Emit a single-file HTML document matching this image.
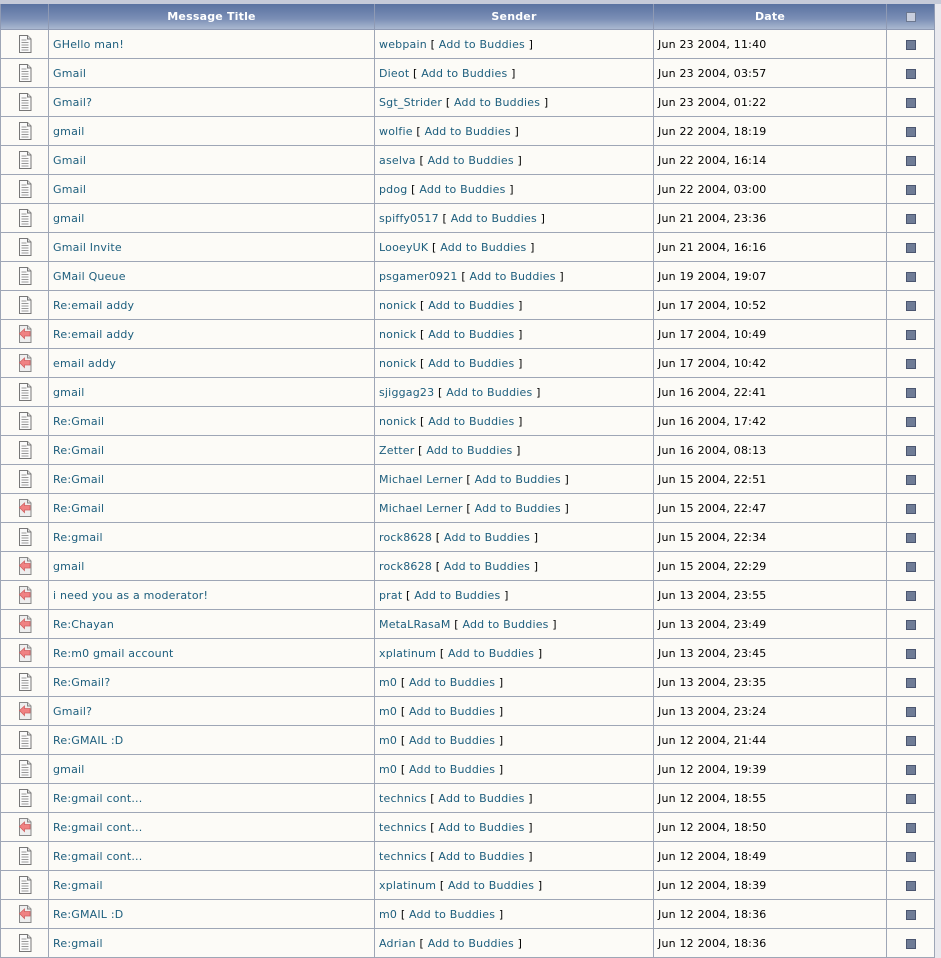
<!DOCTYPE html>
<html><head><meta charset="utf-8"><style>
body{margin:0;background:#e9e9ee;font-family:"DejaVu Sans","Liberation Sans",sans-serif;font-size:11px;letter-spacing:0.2px}
.top{height:4px;background:#c5cad8;width:941px}
table{border-collapse:collapse;table-layout:fixed;width:935px;background:#fcfbf7}
td,th{border:1px solid #9ea6b6;padding:0 0 0 4px;height:28px;white-space:nowrap;overflow:hidden}
th{height:25px;background:linear-gradient(#5a72a0,#7b8fb6 60%,#aab8d0);color:#fff;font-weight:bold;text-align:center;padding:0;border-top:none;border-color:#8f9ab4}
td.i,td.c{text-align:center;padding:0}
a{color:#1d5e7d;text-decoration:none}
.cb{display:inline-block;width:8px;height:8px;background:#6f7c96;border:1px solid #4b5670;vertical-align:middle}
th .cb{background:#c8cede;border-color:#6c7890}
svg{vertical-align:middle}
</style></head><body>
<div class="top"></div>
<svg width="0" height="0" style="position:absolute"><defs>
<symbol id="d" viewBox="0 0 16 18"><path d="M2.5 0.5h8l3.5 3.5v13.5h-11.5z" fill="#fafafa" stroke="#777"/><path d="M10.5 0.5v3.5h3.5" fill="#ddd" stroke="#777"/><path d="M4.5 5h5M4.5 7.5h7M4.5 10h7M4.5 12.5h7M4.5 15h7" stroke="#999"/></symbol>
<symbol id="r" viewBox="0 0 16 18"><path d="M2.5 0.5h8l3.5 3.5v13.5h-11.5z" fill="#eee" stroke="#888"/><path d="M10.5 0.5v3.5h3.5" fill="#ddd" stroke="#888"/><path d="M2.5 8.5l5-4.5v2.5h5.5v4.5h-5.5v2.5z" fill="#f08283" stroke="#d06060" stroke-width="0.8"/></symbol>
</defs></svg>
<table>
<colgroup><col style="width:48px"><col style="width:326px"><col style="width:279px"><col style="width:233px"><col style="width:48px"></colgroup>
<tr><th></th><th>Message Title</th><th>Sender</th><th>Date</th><th><span class="cb"></span></th></tr>
<tr><td class="i"><svg width="16" height="18"><use href="#d"/></svg></td><td><a>GHello man!</a></td><td><a>webpain</a> [ <a>Add to Buddies</a> ]</td><td>Jun 23 2004, 11:40</td><td class="c"><span class="cb"></span></td></tr>
<tr><td class="i"><svg width="16" height="18"><use href="#d"/></svg></td><td><a>Gmail</a></td><td><a>Dieot</a> [ <a>Add to Buddies</a> ]</td><td>Jun 23 2004, 03:57</td><td class="c"><span class="cb"></span></td></tr>
<tr><td class="i"><svg width="16" height="18"><use href="#d"/></svg></td><td><a>Gmail?</a></td><td><a>Sgt_Strider</a> [ <a>Add to Buddies</a> ]</td><td>Jun 23 2004, 01:22</td><td class="c"><span class="cb"></span></td></tr>
<tr><td class="i"><svg width="16" height="18"><use href="#d"/></svg></td><td><a>gmail</a></td><td><a>wolfie</a> [ <a>Add to Buddies</a> ]</td><td>Jun 22 2004, 18:19</td><td class="c"><span class="cb"></span></td></tr>
<tr><td class="i"><svg width="16" height="18"><use href="#d"/></svg></td><td><a>Gmail</a></td><td><a>aselva</a> [ <a>Add to Buddies</a> ]</td><td>Jun 22 2004, 16:14</td><td class="c"><span class="cb"></span></td></tr>
<tr><td class="i"><svg width="16" height="18"><use href="#d"/></svg></td><td><a>Gmail</a></td><td><a>pdog</a> [ <a>Add to Buddies</a> ]</td><td>Jun 22 2004, 03:00</td><td class="c"><span class="cb"></span></td></tr>
<tr><td class="i"><svg width="16" height="18"><use href="#d"/></svg></td><td><a>gmail</a></td><td><a>spiffy0517</a> [ <a>Add to Buddies</a> ]</td><td>Jun 21 2004, 23:36</td><td class="c"><span class="cb"></span></td></tr>
<tr><td class="i"><svg width="16" height="18"><use href="#d"/></svg></td><td><a>Gmail Invite</a></td><td><a>LooeyUK</a> [ <a>Add to Buddies</a> ]</td><td>Jun 21 2004, 16:16</td><td class="c"><span class="cb"></span></td></tr>
<tr><td class="i"><svg width="16" height="18"><use href="#d"/></svg></td><td><a>GMail Queue</a></td><td><a>psgamer0921</a> [ <a>Add to Buddies</a> ]</td><td>Jun 19 2004, 19:07</td><td class="c"><span class="cb"></span></td></tr>
<tr><td class="i"><svg width="16" height="18"><use href="#d"/></svg></td><td><a>Re:email addy</a></td><td><a>nonick</a> [ <a>Add to Buddies</a> ]</td><td>Jun 17 2004, 10:52</td><td class="c"><span class="cb"></span></td></tr>
<tr><td class="i"><svg width="16" height="18"><use href="#r"/></svg></td><td><a>Re:email addy</a></td><td><a>nonick</a> [ <a>Add to Buddies</a> ]</td><td>Jun 17 2004, 10:49</td><td class="c"><span class="cb"></span></td></tr>
<tr><td class="i"><svg width="16" height="18"><use href="#r"/></svg></td><td><a>email addy</a></td><td><a>nonick</a> [ <a>Add to Buddies</a> ]</td><td>Jun 17 2004, 10:42</td><td class="c"><span class="cb"></span></td></tr>
<tr><td class="i"><svg width="16" height="18"><use href="#d"/></svg></td><td><a>gmail</a></td><td><a>sjiggag23</a> [ <a>Add to Buddies</a> ]</td><td>Jun 16 2004, 22:41</td><td class="c"><span class="cb"></span></td></tr>
<tr><td class="i"><svg width="16" height="18"><use href="#d"/></svg></td><td><a>Re:Gmail</a></td><td><a>nonick</a> [ <a>Add to Buddies</a> ]</td><td>Jun 16 2004, 17:42</td><td class="c"><span class="cb"></span></td></tr>
<tr><td class="i"><svg width="16" height="18"><use href="#d"/></svg></td><td><a>Re:Gmail</a></td><td><a>Zetter</a> [ <a>Add to Buddies</a> ]</td><td>Jun 16 2004, 08:13</td><td class="c"><span class="cb"></span></td></tr>
<tr><td class="i"><svg width="16" height="18"><use href="#d"/></svg></td><td><a>Re:Gmail</a></td><td><a>Michael Lerner</a> [ <a>Add to Buddies</a> ]</td><td>Jun 15 2004, 22:51</td><td class="c"><span class="cb"></span></td></tr>
<tr><td class="i"><svg width="16" height="18"><use href="#r"/></svg></td><td><a>Re:Gmail</a></td><td><a>Michael Lerner</a> [ <a>Add to Buddies</a> ]</td><td>Jun 15 2004, 22:47</td><td class="c"><span class="cb"></span></td></tr>
<tr><td class="i"><svg width="16" height="18"><use href="#d"/></svg></td><td><a>Re:gmail</a></td><td><a>rock8628</a> [ <a>Add to Buddies</a> ]</td><td>Jun 15 2004, 22:34</td><td class="c"><span class="cb"></span></td></tr>
<tr><td class="i"><svg width="16" height="18"><use href="#r"/></svg></td><td><a>gmail</a></td><td><a>rock8628</a> [ <a>Add to Buddies</a> ]</td><td>Jun 15 2004, 22:29</td><td class="c"><span class="cb"></span></td></tr>
<tr><td class="i"><svg width="16" height="18"><use href="#r"/></svg></td><td><a>i need you as a moderator!</a></td><td><a>prat</a> [ <a>Add to Buddies</a> ]</td><td>Jun 13 2004, 23:55</td><td class="c"><span class="cb"></span></td></tr>
<tr><td class="i"><svg width="16" height="18"><use href="#r"/></svg></td><td><a>Re:Chayan</a></td><td><a>MetaLRasaM</a> [ <a>Add to Buddies</a> ]</td><td>Jun 13 2004, 23:49</td><td class="c"><span class="cb"></span></td></tr>
<tr><td class="i"><svg width="16" height="18"><use href="#r"/></svg></td><td><a>Re:m0 gmail account</a></td><td><a>xplatinum</a> [ <a>Add to Buddies</a> ]</td><td>Jun 13 2004, 23:45</td><td class="c"><span class="cb"></span></td></tr>
<tr><td class="i"><svg width="16" height="18"><use href="#d"/></svg></td><td><a>Re:Gmail?</a></td><td><a>m0</a> [ <a>Add to Buddies</a> ]</td><td>Jun 13 2004, 23:35</td><td class="c"><span class="cb"></span></td></tr>
<tr><td class="i"><svg width="16" height="18"><use href="#r"/></svg></td><td><a>Gmail?</a></td><td><a>m0</a> [ <a>Add to Buddies</a> ]</td><td>Jun 13 2004, 23:24</td><td class="c"><span class="cb"></span></td></tr>
<tr><td class="i"><svg width="16" height="18"><use href="#d"/></svg></td><td><a>Re:GMAIL :D</a></td><td><a>m0</a> [ <a>Add to Buddies</a> ]</td><td>Jun 12 2004, 21:44</td><td class="c"><span class="cb"></span></td></tr>
<tr><td class="i"><svg width="16" height="18"><use href="#d"/></svg></td><td><a>gmail</a></td><td><a>m0</a> [ <a>Add to Buddies</a> ]</td><td>Jun 12 2004, 19:39</td><td class="c"><span class="cb"></span></td></tr>
<tr><td class="i"><svg width="16" height="18"><use href="#d"/></svg></td><td><a>Re:gmail cont...</a></td><td><a>technics</a> [ <a>Add to Buddies</a> ]</td><td>Jun 12 2004, 18:55</td><td class="c"><span class="cb"></span></td></tr>
<tr><td class="i"><svg width="16" height="18"><use href="#r"/></svg></td><td><a>Re:gmail cont...</a></td><td><a>technics</a> [ <a>Add to Buddies</a> ]</td><td>Jun 12 2004, 18:50</td><td class="c"><span class="cb"></span></td></tr>
<tr><td class="i"><svg width="16" height="18"><use href="#d"/></svg></td><td><a>Re:gmail cont...</a></td><td><a>technics</a> [ <a>Add to Buddies</a> ]</td><td>Jun 12 2004, 18:49</td><td class="c"><span class="cb"></span></td></tr>
<tr><td class="i"><svg width="16" height="18"><use href="#d"/></svg></td><td><a>Re:gmail</a></td><td><a>xplatinum</a> [ <a>Add to Buddies</a> ]</td><td>Jun 12 2004, 18:39</td><td class="c"><span class="cb"></span></td></tr>
<tr><td class="i"><svg width="16" height="18"><use href="#r"/></svg></td><td><a>Re:GMAIL :D</a></td><td><a>m0</a> [ <a>Add to Buddies</a> ]</td><td>Jun 12 2004, 18:36</td><td class="c"><span class="cb"></span></td></tr>
<tr><td class="i"><svg width="16" height="18"><use href="#d"/></svg></td><td><a>Re:gmail</a></td><td><a>Adrian</a> [ <a>Add to Buddies</a> ]</td><td>Jun 12 2004, 18:36</td><td class="c"><span class="cb"></span></td></tr>
</table>
</body></html>
